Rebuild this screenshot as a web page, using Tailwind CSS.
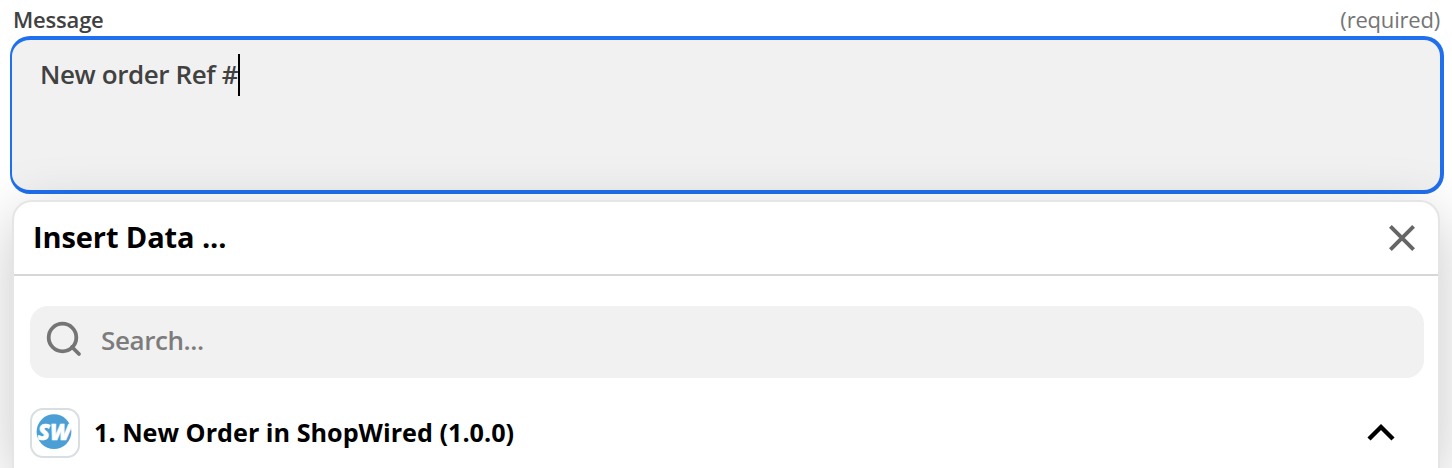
<!DOCTYPE html>
<html lang="en">

<head>
    <meta charset="UTF-8">
    <meta name="viewport" content="width=device-width, initial-scale=1.0">
    <title>Insert Data</title>
    <script src="https://cdn.jsdelivr.net/npm/@tailwindcss/browser@4"></script>
</head>

<body class="bg-white font-['Open_Sans','Noto_Sans',sans-serif] h-[468px] overflow-hidden">

    <div class="flex items-center justify-between h-9 pl-[13px] pr-[12px] pt-px">
        <label for="message" class="text-[22px] leading-8 font-semibold tracking-[-0.2px] text-[#414141]">Message</label>
        <span class="text-[22px] leading-8 tracking-[-0.2px] text-[#757575]">(required)</span>
    </div>

    <!-- message field -->
    <div id="message" class="ml-[10px] mr-2 h-[158px] rounded-[20px] border-4 border-l-2 border-[#1f6fee] bg-[#f1f1f1] pl-7 pt-[14px] flex items-start">
        <span class="-mt-px text-[26px] leading-[42px] font-semibold tracking-[-0.4px] text-[#414141] whitespace-nowrap">New order Ref #</span>
        <span class="w-[2px] h-[42px] bg-black"></span>
    </div>

    <!-- insert data panel -->
    <div class="relative mt-[6px] mx-3 h-[268px] bg-white border-2 border-b-0 border-[#e5e5e5] rounded-t-[20px] shadow-[0_16px_60px_rgba(0,0,0,0.22)]">
        <div class="flex items-center justify-between h-[74px] pl-[19px] pr-[22px] border-b-2 border-[#d7d7d7]">
            <h2 class="-mt-[2px] text-[29px] leading-[72px] font-bold tracking-[-0.1px] text-black">Insert Data ...</h2>
            <svg class="w-7 h-7" viewBox="0 0 28 28" fill="none" stroke="#666666" stroke-width="3.9">
                <path d="M2.4 2.4L25.6 25.6M25.6 2.4L2.4 25.6" />
            </svg>
        </div>

        <div class="mt-[30px] ml-4 mr-[14px] h-[72px] flex items-center bg-[#f1f1f1] rounded-[18px] pl-4">
            <svg class="w-9 h-9 -mt-[6px]" viewBox="0 0 36 36" fill="none" stroke="#757575" stroke-width="3.8">
                <circle cx="16.5" cy="16.5" r="13.8" />
                <path d="M26 26L33 33" stroke-linecap="round" />
            </svg>
            <span class="ml-[19px] -mt-[3px] text-[26px] font-semibold tracking-[-0.4px] text-[#7c7c7c]">Search...</span>
        </div>

        <div class="mt-[30px] ml-4 mr-[43px] h-[50px] flex items-center">
            <div class="w-[50px] h-[50px] shrink-0 flex items-center justify-center border-2 border-[#d8dee1] rounded-[13px]">
                <svg class="w-9 h-9 overflow-visible" viewBox="0 0 36 36">
                    <circle cx="17" cy="16.7" r="17.4" fill="#4b9fd5" />
                    <text x="0.8" y="24.5" textLength="33" lengthAdjust="spacingAndGlyphs" fill="#ffffff" stroke="#ffffff" stroke-width="0.5" font-family="Open Sans" font-size="23.5" font-weight="800" font-style="italic">SW</text>
                </svg>
            </div>
            <span class="ml-[14px] flex-1 text-[25.2px] font-bold text-black whitespace-nowrap">1. New Order in ShopWired (1.0.0)</span>
            <svg class="w-7 h-[18px] -mt-[2px] overflow-visible" viewBox="0 0 28 18" fill="none" stroke="#000000" stroke-width="4.4">
                <path d="M2 16L14 4L26 16" />
            </svg>
        </div>
    </div>

</body>

</html>
